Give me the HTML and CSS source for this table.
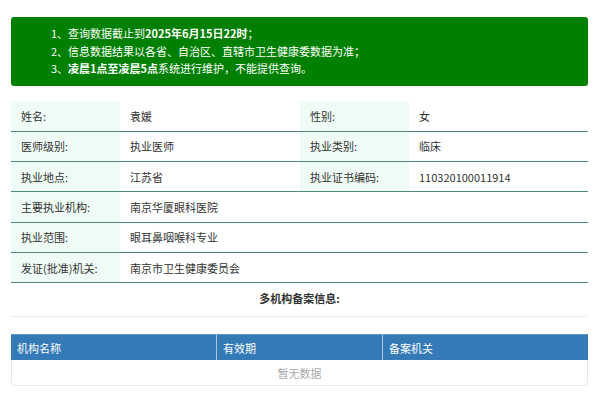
FILE: index.html
```html
<!DOCTYPE html>
<html lang="zh-CN">
<head>
<meta charset="utf-8">
<title>医师查询</title>
<link rel="stylesheet" href="styles.css">
</head>
<body>
<div class="page">
  <div class="notice">
    <p>1、查询数据截止到<b>2025年6月15日22时</b>；</p>
    <p>2、信息数据结果以各省、自治区、直辖市卫生健康委数据为准；</p>
    <p>3、<b>凌晨1点至凌晨5点</b>系统进行维护，不能提供查询。</p>
  </div>

  <table class="info">
    <colgroup>
      <col class="c1"><col class="c2"><col class="c3"><col class="c4">
    </colgroup>
    <tr><td class="lbl">姓名:</td><td>袁媛</td><td class="lbl">性别:</td><td>女</td></tr>
    <tr><td class="lbl">医师级别:</td><td>执业医师</td><td class="lbl">执业类别:</td><td>临床</td></tr>
    <tr><td class="lbl">执业地点:</td><td>江苏省</td><td class="lbl">执业证书编码:</td><td>110320100011914</td></tr>
    <tr><td class="lbl">主要执业机构:</td><td colspan="3">南京华厦眼科医院</td></tr>
    <tr><td class="lbl">执业范围:</td><td colspan="3">眼耳鼻咽喉科专业</td></tr>
    <tr><td class="lbl">发证(批准)机关:</td><td colspan="3">南京市卫生健康委员会</td></tr>
  </table>

  <div class="subtitle">多机构备案信息:</div>

  <table class="multi">
    <colgroup>
      <col class="m1"><col class="m2"><col class="m3">
    </colgroup>
    <thead>
      <tr><th>机构名称</th><th>有效期</th><th>备案机关</th></tr>
    </thead>
    <tbody>
      <tr><td colspan="3" class="empty">暂无数据</td></tr>
    </tbody>
  </table>
</div>
</body>
</html>
```

FILE: styles.css
```css
* { box-sizing: border-box; }
html, body {
  margin: 0;
  padding: 0;
  background: #fff;
}
body {
  font-family: "Noto Sans CJK SC", "Noto Sans", "Liberation Sans", sans-serif;
  font-size: 11px;
  color: #333;
}
.page {
  padding: 17px 12px 0 11px;
}
.notice {
  background: #008000;
  color: #fff;
  border-radius: 3px;
  padding: 8px 10px 8px 40px;
  height: 69px;
}
.notice p {
  margin: 0;
  line-height: 17.5px;
}
.notice b { font-weight: bold; }

.info {
  width: 100%;
  border-collapse: collapse;
  margin-top: 15px;
  table-layout: fixed;
}
.info .c1 { width: 109px; }
.info .c2 { width: 180px; }
.info .c3 { width: 109px; }
.info td {
  height: 30.3px;
  padding: 0 10px;
  border-bottom: 1px solid #4f8a74;
  vertical-align: middle;
  line-height: 16px;
}
.info td.lbl {
  background: #effcf5;
}

.subtitle {
  text-align: center;
  font-weight: bold;
  color: #333;
  height: 34px;
  line-height: 31px;
  border-bottom: 1px solid #eeeeee;
}

.multi {
  width: 100%;
  margin-top: 17px;
  border-collapse: separate;
  border-spacing: 0;
  table-layout: fixed;
}
.multi .m1 { width: 205px; }
.multi .m2 { width: 166px; }
.multi th {
  background: #337ab7;
  color: #fff;
  font-weight: normal;
  text-align: left;
  height: 26px;
  padding: 0 6px;
  border-left: 1px solid #a9c6e0;
  border-top: 1px solid #5f97c8;
}
.multi th:first-child { border-left: none; }
.multi td.empty {
  height: 26px;
  text-align: center;
  color: #aaa;
  border: 1px solid #e8e8e8;
  border-top: none;
  border-radius: 0 0 4px 4px;
}
```
